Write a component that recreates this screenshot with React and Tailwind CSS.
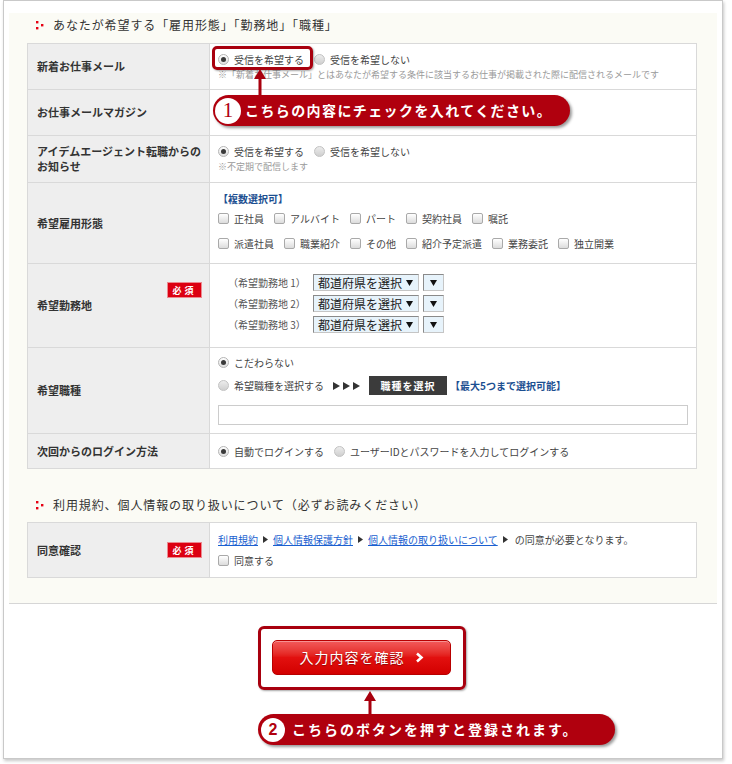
import { Fragment } from "react";

const RED = "#b0000e";

function Dots() {
  return (
    <svg width="8" height="9" viewBox="0 0 8 9" className="shrink-0">
      <rect x="0" y="0" width="2.4" height="2.4" fill="#e60012" />
      <rect x="0" y="6" width="2.4" height="2.4" fill="#e60012" />
      <rect x="5" y="3" width="2.4" height="2.4" fill="#e60012" />
    </svg>
  );
}

function Radio({ on }) {
  return on ? (
    <span className="inline-flex h-[11px] w-[11px] shrink-0 items-center justify-center rounded-full border border-[#b5b5b5] bg-linear-to-b from-[#ffffff] to-[#dedede]">
      <span className="h-[5px] w-[5px] rounded-full bg-[#3a3a3a]" />
    </span>
  ) : (
    <span className="inline-block h-[11px] w-[11px] shrink-0 rounded-full border border-[#c2c2c2] bg-linear-to-b from-[#ececec] to-[#cfcfcf]" />
  );
}

function Check() {
  return (
    <span className="inline-block h-[11px] w-[11px] shrink-0 rounded-[2px] border border-[#a9a9a9] bg-linear-to-b from-[#ffffff] to-[#dcdcdc]" />
  );
}

function Opt({ radio, on, children }) {
  return (
    <span className="flex items-center gap-[5px] whitespace-nowrap">
      {radio ? <Radio on={on} /> : <Check />}
      <span>{children}</span>
    </span>
  );
}

function Must() {
  return (
    <span className="flex h-[16px] w-[35px] items-center justify-center border border-[#ec8a90] bg-[#dc0011] text-[9px] leading-none tracking-[3px] text-white">
      必須
    </span>
  );
}

function Row({ label, h, last, badge, children, className = "" }) {
  return (
    <div
      className={`grid grid-cols-[182px_1fr] ${last ? "" : "border-b border-[#d9d9d9]"}`}
      style={{ height: h }}
    >
      <div className="relative flex items-center border-r border-[#d9d9d9] bg-[#eeeeee] pl-[9px] text-[11px] font-bold leading-[15px] text-[#333]">
        {label}
        {badge && (
          <span className="absolute right-[7px] top-[18px]">
            <Must />
          </span>
        )}
      </div>
      <div className={`bg-white pl-[8px] text-[10px] leading-[15px] text-[#444] ${className}`}>
        {children}
      </div>
    </div>
  );
}

function Head({ children }) {
  return (
    <div className="flex h-[24px] items-center gap-[9px] pl-[27px] text-[12px] tracking-[0.9px] text-[#333]">
      <Dots />
      <span>{children}</span>
    </div>
  );
}

function Tri() {
  return (
    <svg width="7" height="6" viewBox="0 0 7 6" className="shrink-0">
      <polygon points="0,0 7,0 3.5,6" fill="#111" />
    </svg>
  );
}

function Select({ label }) {
  return (
    <span className="flex h-[17px] items-center gap-[4px]">
      <span className="flex h-[17px] w-[106px] items-center justify-between whitespace-nowrap border border-[#8a8a8a] border-b-[#c5c5c5] border-r-[#c5c5c5] bg-[#e7f3fb] pl-[4px] pr-[5px] text-[12px] leading-none text-[#222]">
        {label}
        <Tri />
      </span>
      <span className="flex h-[17px] w-[21px] items-center justify-center border border-[#8a8a8a] border-b-[#c5c5c5] border-r-[#c5c5c5] bg-[#e7f3fb]">
        <Tri />
      </span>
    </span>
  );
}

function Arrowheads() {
  return (
    <svg width="27" height="8" viewBox="0 0 27 8" className="shrink-0">
      <polygon points="0,0 7,4 0,8" fill="#333" />
      <polygon points="10,0 17,4 10,8" fill="#333" />
      <polygon points="20,0 27,4 20,8" fill="#333" />
    </svg>
  );
}

function SmallTri() {
  return (
    <svg width="5" height="7" viewBox="0 0 5 7" className="mx-[5px] shrink-0">
      <polygon points="0,0 5,3.5 0,7" fill="#333" />
    </svg>
  );
}

function UpArrow({ className, stem }) {
  return (
    <svg
      width="12"
      height={stem}
      viewBox={`0 0 12 ${stem}`}
      className={`absolute ${className}`}
    >
      <polygon points="6,0 0,10 12,10" fill="#a8000e" />
      <rect x="4.5" y="9" width="3" height={stem - 9} fill="#a8000e" />
    </svg>
  );
}

const workTypes1 = ["正社員", "アルバイト", "パート", "契約社員", "嘱託"];
const workTypes2 = ["派遣社員", "職業紹介", "その他", "紹介予定派遣", "業務委託", "独立開業"];

export default function App() {
  return (
    <div className="relative h-[764px] w-[732px] overflow-hidden bg-white pl-[3px] font-['Noto_Sans_CJK_JP',sans-serif] text-[#333]">
      <div className="h-[759px] w-[720px] border border-[#c9c9c9] shadow-[1px_2px_3px_rgba(0,0,0,0.22)]">
        <div className="ml-[5px] mt-[12px] h-[591px] w-[708px] border-b border-[#d6d6d6] bg-[#fbfbf5]">
          <Head>あなたが希望する「雇用形態」「勤務地」「職種」</Head>

          <div className="ml-[18px] mt-[6px] w-[670px] border border-[#d9d9d9]">
            <Row label="新着お仕事メール" h={46} className="flex flex-col justify-center">
              <div className="flex items-center gap-[10px]">
                <Opt radio on>受信を希望する</Opt>
                <Opt radio>受信を希望しない</Opt>
              </div>
              <div className="text-[9px] text-[#9a9a9a]">
                ※「新着お仕事メール」とはあなたが希望する条件に該当するお仕事が掲載された際に配信されるメールです
              </div>
            </Row>

            <Row label="お仕事メールマガジン" h={46} />

            <Row
              label={
                <span>
                  アイデムエージェント転職からの
                  <br />
                  お知らせ
                </span>
              }
              h={47}
              className="flex flex-col justify-center"
            >
              <div className="flex items-center gap-[10px]">
                <Opt radio on>受信を希望する</Opt>
                <Opt radio>受信を希望しない</Opt>
              </div>
              <div className="text-[9px] text-[#9a9a9a]">※不定期で配信します</div>
            </Row>

            <Row label="希望雇用形態" h={81} className="pt-[8px]">
              <div className="font-bold text-[#1c4f91]">【複数選択可】</div>
              <div className="mt-[5px] flex items-center gap-[10px]">
                {workTypes1.map((t) => (
                  <Opt key={t}>{t}</Opt>
                ))}
              </div>
              <div className="mt-[10px] flex items-center gap-[10px]">
                {workTypes2.map((t) => (
                  <Opt key={t}>{t}</Opt>
                ))}
              </div>
            </Row>

            <Row label="希望勤務地" h={84} badge className="flex flex-col gap-[4px] pt-[10px]">
              {[1, 2, 3].map((n) => (
                <div key={n} className="flex h-[17px] items-center pl-[10px]">
                  <span className="w-[85px] whitespace-nowrap text-[#555]">（希望勤務地 {n}）</span>
                  <Select label="都道府県を選択" />
                </div>
              ))}
            </Row>

            <Row label="希望職種" h={86} className="pt-[7px]">
              <Opt radio on>こだわらない</Opt>
              <div className="mt-[6px] flex h-[19px] items-center">
                <Opt radio>希望職種を選択する</Opt>
                <span className="ml-[9px]">
                  <Arrowheads />
                </span>
                <span className="ml-[9px] flex h-[19px] w-[78px] items-center justify-center bg-[#3b3b3b] text-[10px] font-bold tracking-[1px] text-white">
                  職種を選択
                </span>
                <span className="ml-[3px] font-bold text-[#1c4f91]">【最大5つまで選択可能】</span>
              </div>
              <div className="mt-[10px] h-[20px] w-[470px] border border-[#cccccc] bg-white" />
            </Row>

            <Row label="次回からのログイン方法" h={34} last className="flex items-center gap-[10px]">
              <Opt radio on>自動でログインする</Opt>
              <Opt radio>ユーザーIDとパスワードを入力してログインする</Opt>
            </Row>
          </div>

          <div className="mt-[24px]">
            <Head>利用規約、個人情報の取り扱いについて（必ずお読みください）</Head>
          </div>

          <div className="ml-[18px] mt-[5px] w-[670px] border border-[#d9d9d9]">
            <div className="grid h-[54px] grid-cols-[182px_1fr]">
              <div className="flex items-center justify-between border-r border-[#d9d9d9] bg-[#eeeeee] pl-[9px] pr-[7px] text-[11px] font-bold text-[#333]">
                同意確認
                <Must />
              </div>
              <div className="flex flex-col justify-center gap-[6px] bg-white pl-[8px] text-[10px] leading-[15px] text-[#444]">
                <div className="flex items-center">
                  {["利用規約", "個人情報保護方針", "個人情報の取り扱いについて"].map((t) => (
                    <Fragment key={t}>
                      <span className="text-[#1a5fd0] underline">{t}</span>
                      <SmallTri />
                    </Fragment>
                  ))}
                  <span className="ml-[2px]">の同意が必要となります。</span>
                </div>
                <Opt>同意する</Opt>
              </div>
            </div>
          </div>
        </div>

        <div className="pl-[268px] pt-[36px]">
          <div className="flex h-[35px] w-[179px] items-center justify-center gap-[10px] rounded-[5px] border border-[#b80000] bg-linear-to-b from-[#f25a5a] via-[#e2100f] to-[#d30000] shadow-[inset_0_1px_0_rgba(255,255,255,0.35)]">
            <span className="text-[14px] tracking-[1px] text-white [text-shadow:0_1px_1px_rgba(0,0,0,0.35)]">
              入力内容を確認
            </span>
            <svg width="9" height="11" viewBox="0 0 9 11">
              <polyline points="2,1.5 6.5,5.5 2,9.5" fill="none" stroke="#fff" strokeWidth="2.6" />
            </svg>
          </div>
        </div>
      </div>

      {/* callout 1 */}
      <div className="absolute left-[212px] top-[46px] h-[24px] w-[101px] rounded-[5px] border-[3px] border-[#a8000e] shadow-[1px_1px_2px_rgba(0,0,0,0.35)]" />
      <UpArrow className="left-[254px] top-[69px]" stem={27} />
      <div
        className="absolute left-[213px] top-[95px] flex h-[31px] w-[357px] items-center rounded-full shadow-[2px_2px_3px_rgba(0,0,0,0.4)]"
        style={{ background: RED }}
      >
        <span className="ml-[2px] flex h-[26px] w-[26px] items-center justify-center rounded-full bg-white font-['Liberation_Serif',serif] text-[21px] leading-none text-[#b0000e]">
          1
        </span>
        <span className="ml-[4px] text-[14px] font-bold tracking-[1.4px] text-white">
          こちらの内容にチェックを入れてください。
        </span>
      </div>

      {/* callout 2 */}
      <div className="absolute left-[258px] top-[626px] h-[64px] w-[208px] rounded-[6px] border-[3px] border-[#a8000e] shadow-[1px_1px_2px_rgba(0,0,0,0.35)]" />
      <UpArrow className="left-[364px] top-[691px]" stem={24} />
      <div
        className="absolute left-[258px] top-[714px] flex h-[31px] w-[357px] items-center rounded-full shadow-[2px_2px_3px_rgba(0,0,0,0.4)]"
        style={{ background: RED }}
      >
        <span className="ml-[3px] flex h-[24px] w-[24px] items-center justify-center rounded-full bg-white font-['Liberation_Sans',sans-serif] text-[16px] font-bold leading-none text-[#b0000e]">
          2
        </span>
        <span className="ml-[7px] text-[14px] font-bold tracking-[2px] text-white">
          こちらのボタンを押すと登録されます。
        </span>
      </div>
    </div>
  );
}
